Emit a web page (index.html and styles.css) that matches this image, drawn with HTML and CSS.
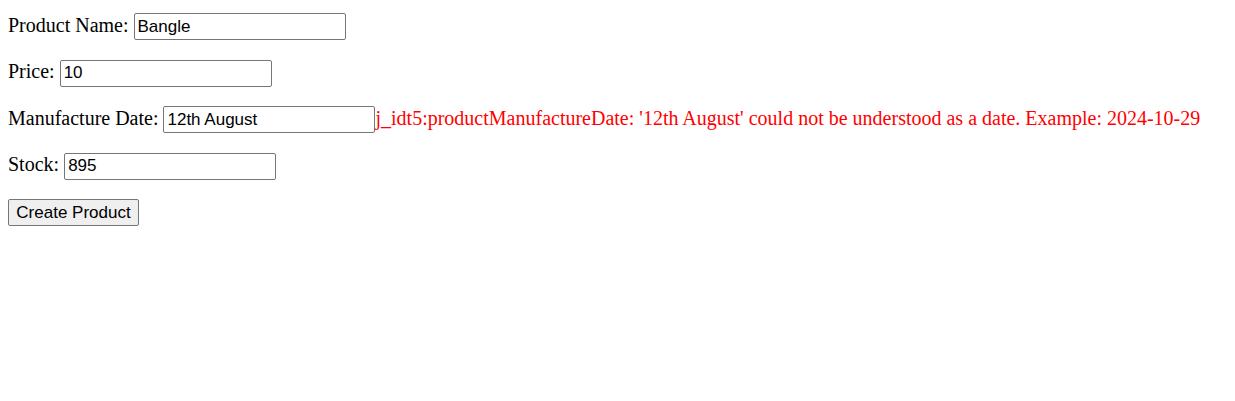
FILE: index.html
```html
<!DOCTYPE html>
<html>
<head>
<meta charset="utf-8">
<link rel="stylesheet" href="styles.css">
</head>
<body>
<form class="form">
  <div class="row"><label class="label">Product Name:</label><input class="field" type="text" value="Bangle"></div>
  <div class="row"><label class="label">Price:</label><input class="field" type="text" value="10"></div>
  <div class="row"><label class="label">Manufacture Date:</label><input class="field" type="text" value="12th August"><span class="error">j_idt5:productManufactureDate: '12th August' could not be understood as a date. Example: 2024-10-29</span></div>
  <div class="row"><label class="label">Stock:</label><input class="field" type="text" value="895"></div>
  <div class="row"><button class="btn" type="button">Create Product</button></div>
</form>
</body>
</html>
```

FILE: styles.css
```css
html, body {
  margin: 0;
  padding: 0;
  background: #ffffff;
}
body {
  font-family: "Liberation Serif", "Times New Roman", serif;
  font-size: 20px;
  color: #000;
}
.form {
  display: flex;
  flex-direction: column;
  gap: 19.5px;
  padding: 13px 8px;
}
.row {
  display: flex;
  align-items: baseline;
  height: 27px;
}
.label {
  margin-right: 5px;
  white-space: nowrap;
}
.field {
  box-sizing: border-box;
  width: 212px;
  height: 27px;
  margin: 0;
  padding: 1px 3px;
  border: 1px solid #767676;
  border-radius: 2px;
  font-family: "Liberation Sans", Arial, sans-serif;
  font-size: 17px;
  color: #000;
  background: #fff;
}
.error {
  color: #ff0000;
  white-space: nowrap;
}
.btn {
  box-sizing: border-box;
  width: 131px;
  height: 27px;
  margin: 0;
  padding: 1px 6px;
  border: 1px solid #767676;
  border-radius: 2px;
  background: #efefef;
  font-family: "Liberation Sans", Arial, sans-serif;
  font-size: 17px;
  color: #000;
}
```
